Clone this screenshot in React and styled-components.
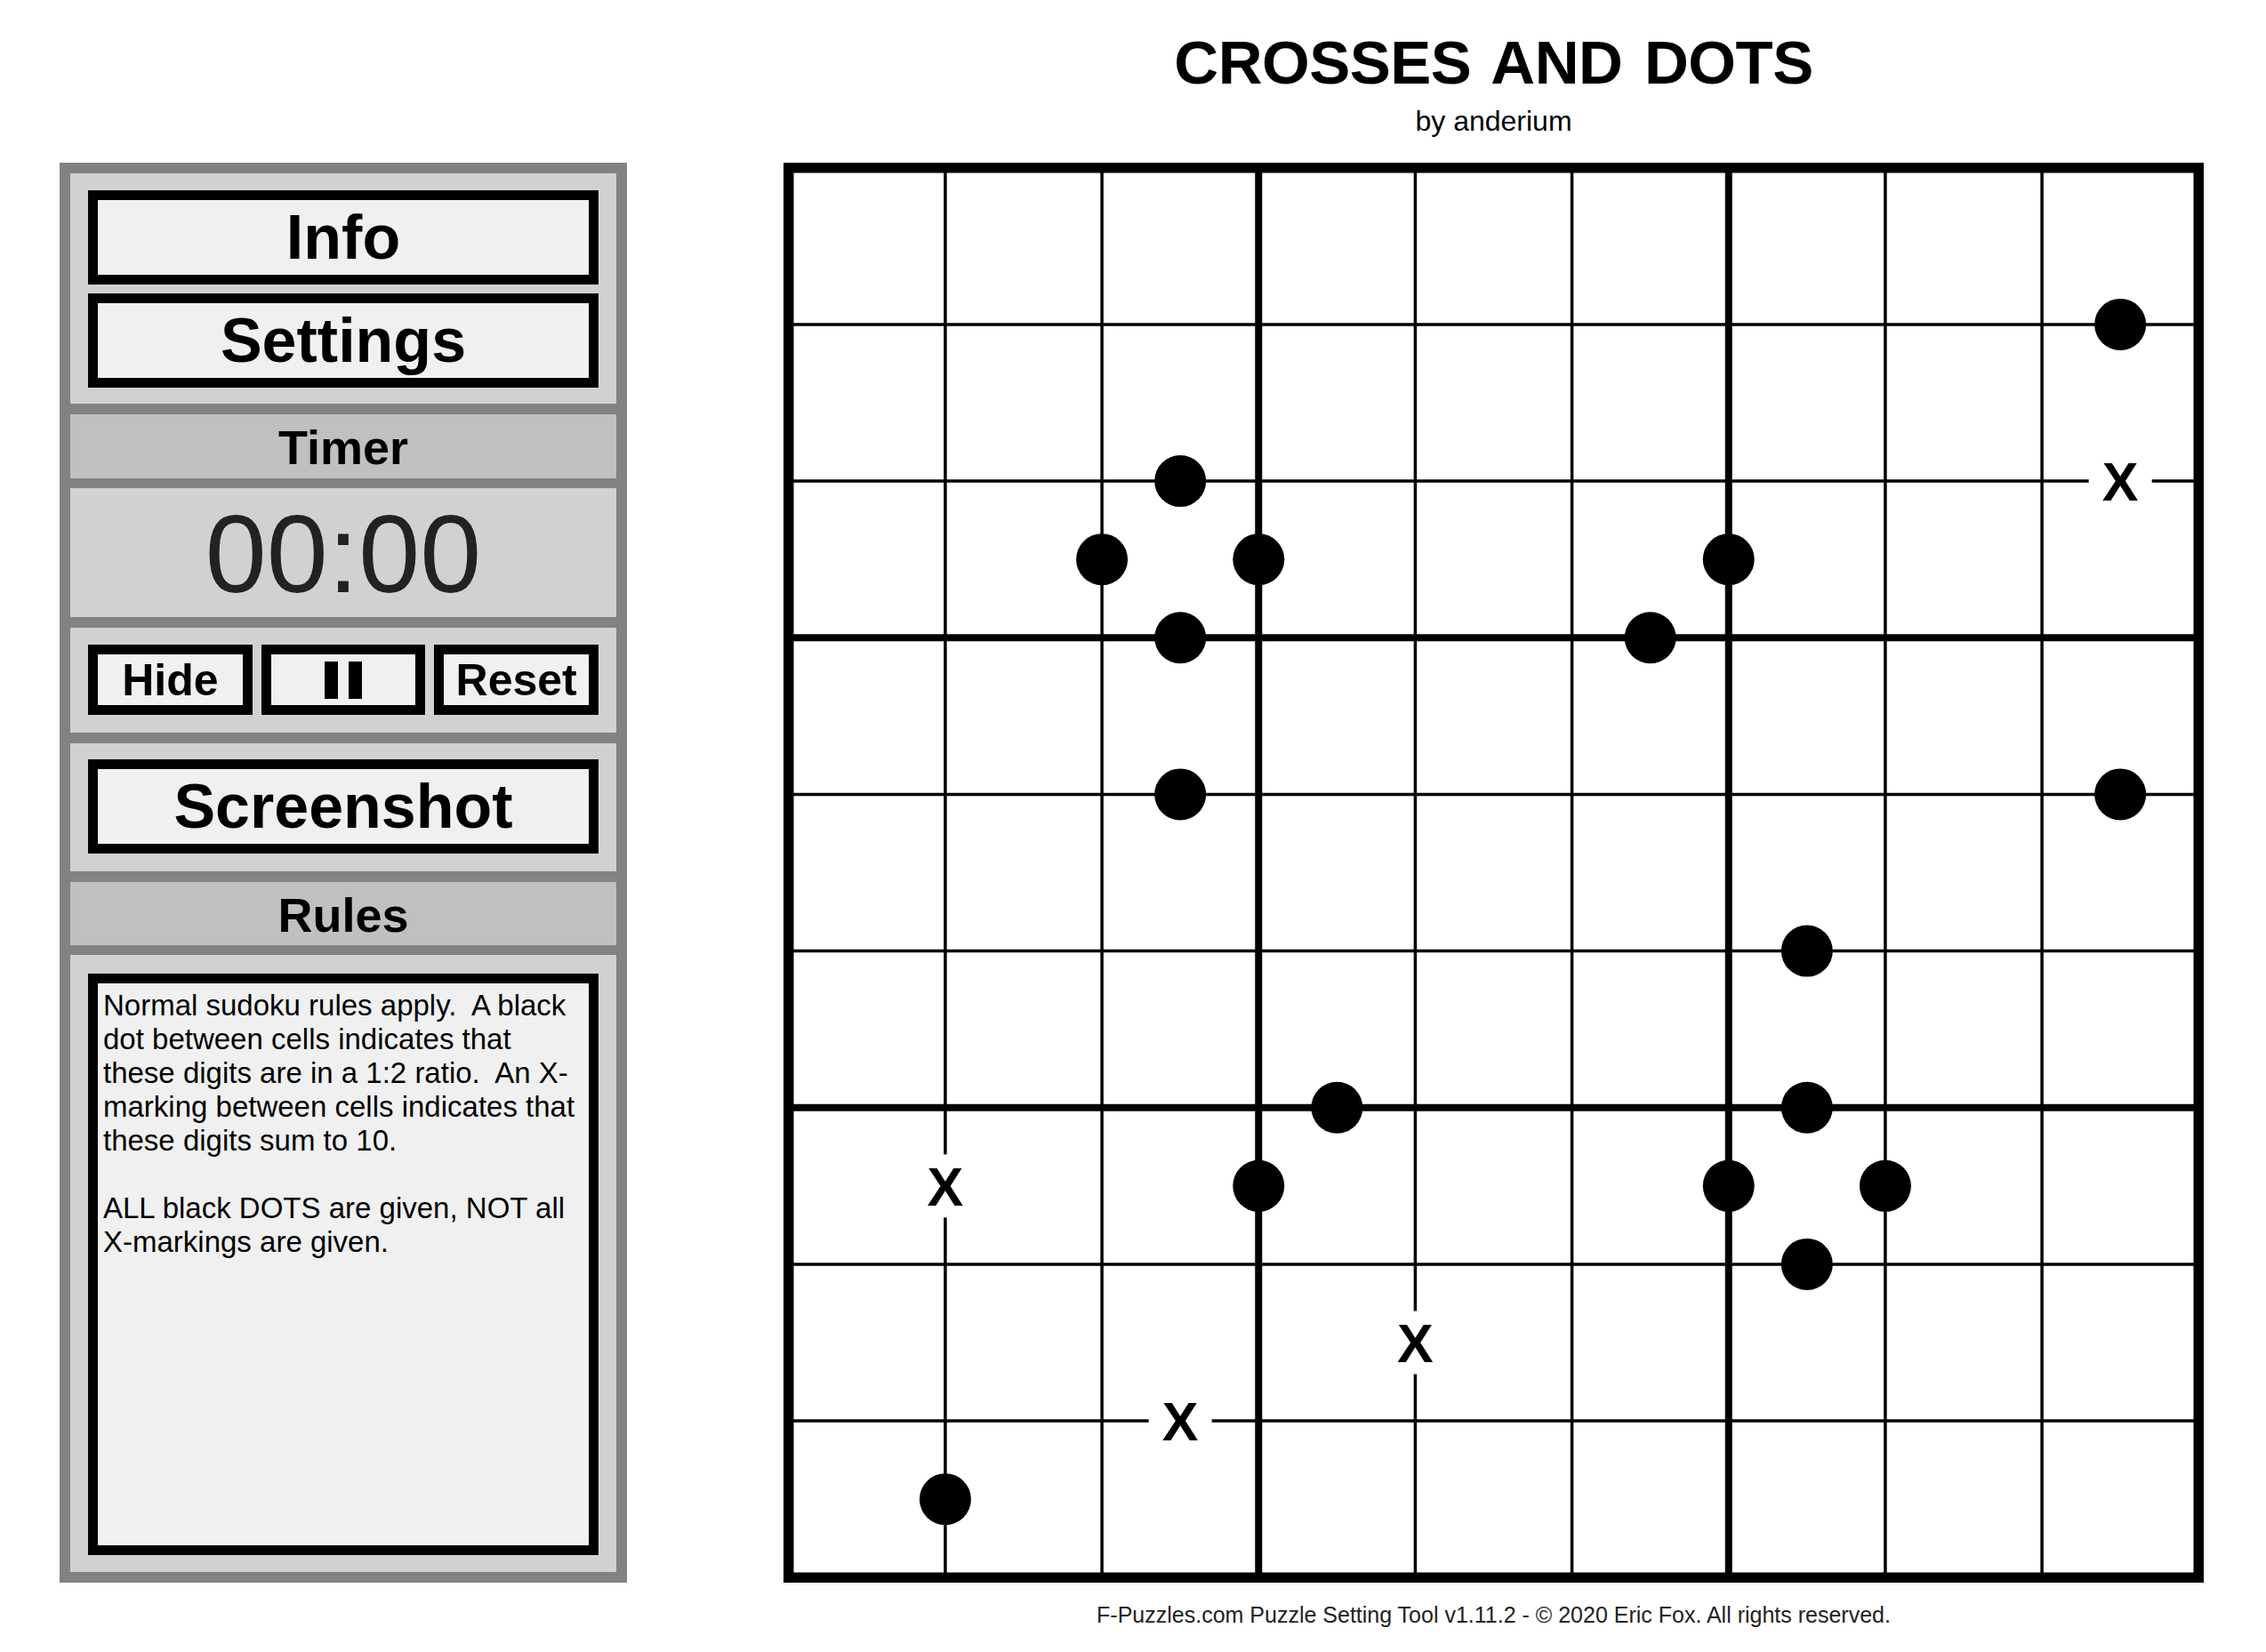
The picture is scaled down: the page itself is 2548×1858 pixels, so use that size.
import React from 'react';
import styled, { createGlobalStyle } from 'styled-components';

const GlobalStyle = createGlobalStyle`
    html, body {
        margin: 0;
        padding: 0;
        background: #FFFFFF;
    }
    body {
        font-family: "Liberation Sans", Arial, sans-serif;
        color: #000000;
    }
`

const Page = styled.div`
    display: flex;
    align-items: flex-start;
    width: 2548px;
    height: 1858px;
    padding-left: 67px;
    box-sizing: border-box;
`

const Sidebar = styled.div`
    margin-top: 183px;
    width: 638px;
    height: 1597px;
    box-sizing: border-box;
    border: 12px solid #828282;
    background: #828282;
    display: flex;
    flex-direction: column;
    gap: 11.5px;
`

const Section = styled.div`
    box-sizing: border-box;
    flex: ${props => props.$grow ? '1 1 auto' : '0 0 auto'};
    height: ${props => props.$height ? `${props.$height}px` : 'auto'};
    padding: ${props => props.$pad || '0 20px'};
    background: ${props => props.$header ? '#C0C0C0' : '#D1D1D1'};
    display: flex;
    flex-direction: column;
    justify-content: center;
    gap: 10px;
`

const Heading = styled.div`
    font-weight: 700;
    font-size: 54px;
    line-height: 1;
    text-align: center;
    padding-top: 3px;
`

const TimerText = styled.div`
    font-size: 124px;
    line-height: 1;
    text-align: center;
    color: #222222;
    padding-top: 3px;
`

const Button = styled.button`
    box-sizing: border-box;
    width: 100%;
    height: ${props => props.$height}px;
    margin: 0;
    padding: 0;
    border: 11px solid #000000;
    border-radius: 0;
    background: #F0F0F0;
    font-family: "Liberation Sans", Arial, sans-serif;
    font-weight: 700;
    font-size: ${props => props.$size}px;
    line-height: 1;
    color: #000000;
    display: flex;
    align-items: center;
    justify-content: center;
    gap: 12px;
`

const ButtonRow = styled.div`
    display: grid;
    grid-template-columns: repeat(3, 1fr);
    gap: 10px;
`

const PauseBar = styled.span`
    display: block;
    width: 15px;
    height: 42px;
    background: #000000;
`

const RulesBox = styled.div`
    flex: 1 1 auto;
    box-sizing: border-box;
    border: 11px solid #000000;
    background: #F0F0F0;
    padding: 6px 9px 6px 6px;
    font-size: 33px;
    line-height: normal;
    white-space: pre-wrap;
    color: #000000;
`

const Main = styled.div`
    margin-left: 176px;
    width: 1597px;
    display: flex;
    flex-direction: column;
    align-items: center;
`

const Header = styled.div`
    height: 183px;
    box-sizing: border-box;
    padding-top: 36px;
    display: flex;
    flex-direction: column;
    align-items: center;
`

const Title = styled.h1`
    margin: 0;
    font-size: 69px;
    line-height: 69px;
    font-weight: 700;
    letter-spacing: -0.5px;
    word-spacing: 6px;
`

const Byline = styled.div`
    margin-top: 15px;
    font-size: 32px;
    line-height: 32px;
`

const Board = styled.svg`
    display: block;
    width: 1597px;
    height: 1597px;
`

const Footer = styled.div`
    margin-top: 24px;
    font-size: 25px;
    line-height: 25px;
    color: #222222;
`

const OFF = 5.75
const SIZE = 1585.5
const CELL = SIZE / 9

const dots = [
    [8.5, 1], [2.5, 2], [2, 2.5], [3, 2.5], [6, 2.5], [2.5, 3], [5.5, 3],
    [2.5, 4], [8.5, 4], [6.5, 5], [3.5, 6], [6.5, 6], [3, 6.5], [6, 6.5],
    [7, 6.5], [6.5, 7], [1, 8.5],
]

const crosses = [[8.5, 2], [1, 6.5], [4, 7.5], [2.5, 8]]

const rules = "Normal sudoku rules apply.  A black dot between cells indicates that these digits are in a 1:2 ratio.  An X-marking between cells indicates that these digits sum to 10.\n\nALL black DOTS are given, NOT all X-markings are given."

const at = (v) => OFF + v * CELL

const PuzzleGrid = () => {
    const thin = []
    const thick = []
    for (let i = 1; i < 9; i++) {
        const list = i % 3 === 0 ? thick : thin
        list.push(<line key={`v${i}`} x1={at(i)} y1={OFF} x2={at(i)} y2={OFF + SIZE} />)
        list.push(<line key={`h${i}`} x1={OFF} y1={at(i)} x2={OFF + SIZE} y2={at(i)} />)
    }

    return (
        <Board viewBox="0 0 1597 1597">
            <rect x="0" y="0" width="1597" height="1597" fill="#FFFFFF" />
            <g stroke="#000000" strokeWidth="3.5">{thin}</g>
            <g stroke="#000000" strokeWidth="8">{thick}</g>
            <rect x={OFF} y={OFF} width={SIZE} height={SIZE} fill="none" stroke="#000000" strokeWidth="11.5" />
            {dots.map(([x, y]) => (
                <circle key={`d${x}-${y}`} cx={at(x)} cy={at(y)} r="29" fill="#000000" />
            ))}
            {crosses.map(([x, y]) => (
                <g key={`x${x}-${y}`}>
                    <rect x={at(x) - 35.5} y={at(y) - 35.5} width="71" height="71" fill="#FFFFFF" />
                    <text
                        x={at(x)}
                        y={at(y) + 22}
                        textAnchor="middle"
                        fontFamily='"Liberation Sans", Arial, sans-serif'
                        fontWeight="700"
                        fontSize="61"
                        fill="#000000"
                    >X</text>
                </g>
            ))}
        </Board>
    )
}

const App = () => {
    return (
        <>
            <GlobalStyle />
            <Page>
                <Sidebar>
                    <Section $height={259} $pad="19px 20px 18px">
                        <Button $height={106} $size={70}>Info</Button>
                        <Button $height={106} $size={70}>Settings</Button>
                    </Section>
                    <Section $header $height={72}>
                        <Heading>Timer</Heading>
                    </Section>
                    <Section $height={145}>
                        <TimerText>00:00</TimerText>
                    </Section>
                    <Section $height={118.5} $pad="19.5px 20px 20px">
                        <ButtonRow>
                            <Button $height={79} $size={50}>Hide</Button>
                            <Button $height={79} $size={50} aria-label="Pause">
                                <PauseBar />
                                <PauseBar />
                            </Button>
                            <Button $height={79} $size={50}>Reset</Button>
                        </ButtonRow>
                    </Section>
                    <Section $height={144.5} $pad="18.5px 20px 19.5px">
                        <Button $height={106} $size={70}>Screenshot</Button>
                    </Section>
                    <Section $header $height={71}>
                        <Heading>Rules</Heading>
                    </Section>
                    <Section $grow $pad="21px 20px 19px">
                        <RulesBox>{rules}</RulesBox>
                    </Section>
                </Sidebar>
                <Main>
                    <Header>
                        <Title>CROSSES AND DOTS</Title>
                        <Byline>by anderium</Byline>
                    </Header>
                    <PuzzleGrid />
                    <Footer>F-Puzzles.com Puzzle Setting Tool v1.11.2 - © 2020 Eric Fox. All rights reserved.</Footer>
                </Main>
            </Page>
        </>
    )
}

export default App
